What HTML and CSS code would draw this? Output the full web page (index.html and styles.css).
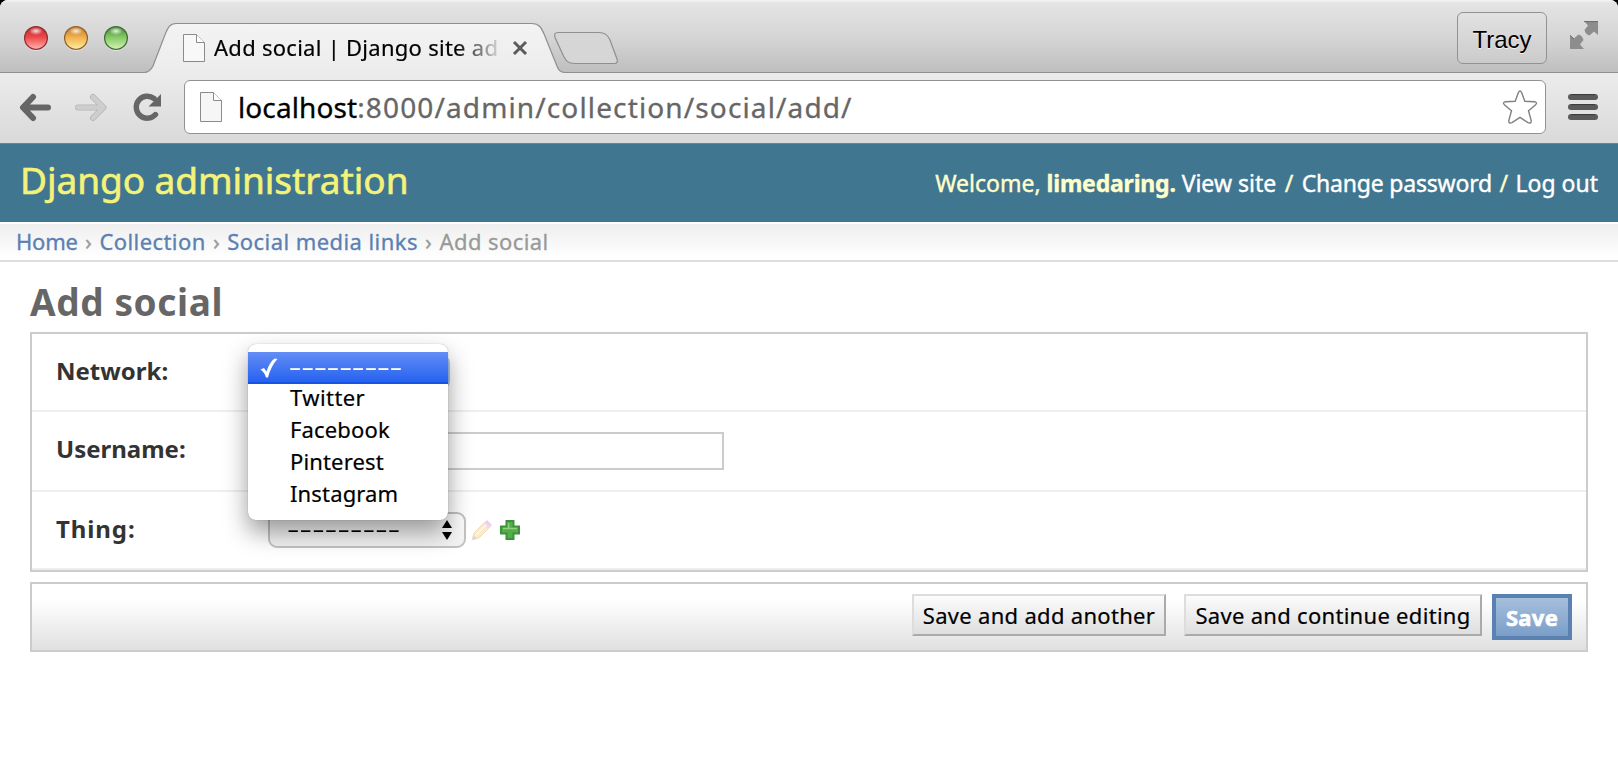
FILE: index.html
```html
<!DOCTYPE html>
<html lang="en">
<head>
<meta charset="utf-8">
<title>Add social | Django site admin</title>
<link rel="stylesheet" href="styles.css">
</head>
<body>
<div class="window">
  <div class="tabstrip">
    <svg class="tab-shapes" width="640" height="74" viewBox="0 0 640 74">
      <defs>
        <linearGradient id="tabFill" x1="0" y1="0" x2="0" y2="1"><stop offset="0" stop-color="#f3f3f3"/><stop offset="1" stop-color="#ececec"/></linearGradient>
        <linearGradient id="red" x1="0" y1="0" x2="0" y2="1"><stop offset="0" stop-color="#b8282c"/><stop offset=".45" stop-color="#ee4547"/><stop offset="1" stop-color="#ffb4ae"/></linearGradient>
        <linearGradient id="amber" x1="0" y1="0" x2="0" y2="1"><stop offset="0" stop-color="#bd7426"/><stop offset=".45" stop-color="#f0ae4a"/><stop offset="1" stop-color="#fff0a0"/></linearGradient>
        <linearGradient id="green" x1="0" y1="0" x2="0" y2="1"><stop offset="0" stop-color="#3f8633"/><stop offset=".45" stop-color="#83c763"/><stop offset="1" stop-color="#d6f5b4"/></linearGradient>
        <radialGradient id="shine"><stop offset="0" stop-color="#fff" stop-opacity=".85"/><stop offset="1" stop-color="#fff" stop-opacity="0"/></radialGradient>
      </defs>
      <path d="M144 74V72.5C149 72.5 151 70 153 66L164.500 36C168 27 170 23.500 176 23.500H532C539 23.500 541 27 544.500 35L556.500 65C558.500 70 560 72.500 565 72.500V74Z" fill="url(#tabFill)"/>
      <path d="M144 72.5C149 72.5 151 70 153 66L164.500 36C168 27 170 23.500 176 23.500H532C539 23.500 541 27 544.500 35L556.500 65C558.500 70 560 72.500 565 72.500" fill="none" stroke="#8f8f8f" stroke-width="1.200"/>
      <path d="M558 32.500H599C605 32.500 608 35 610 40L617 59Q618.500 63.500 614 63.500H575C568 63.500 566 61 563.500 56L555 37.500Q553.500 32.500 558 32.500Z" fill="#d6d6d6" stroke="#8f8f8f" stroke-width="1.200"/>
      <g stroke-width="1.300">
        <circle cx="36" cy="39" r="12" fill="#eee" opacity=".7"/><circle cx="76" cy="39" r="12" fill="#eee" opacity=".7"/><circle cx="116" cy="39" r="12" fill="#eee" opacity=".7"/>
        <circle cx="36" cy="38" r="11.400" fill="url(#red)" stroke="#8c3232"/>
        <circle cx="76" cy="38" r="11.400" fill="url(#amber)" stroke="#8f6230"/>
        <circle cx="116" cy="38" r="11.400" fill="url(#green)" stroke="#3f6f36"/>
      </g>
      <g fill="url(#shine)"><ellipse cx="36" cy="31" rx="7" ry="4"/><ellipse cx="76" cy="31" rx="7" ry="4"/><ellipse cx="116" cy="31" rx="7" ry="4"/></g>
    </svg>
    <div class="tab">
      <svg class="tab-doc" width="22" height="28" viewBox="0 0 22 28"><path d="M.5.5H13.500L21.500 8.500V27.500H.5Z" fill="#f8f8f8" stroke="#8b8b8b"/><path d="M13.500.5V8.500H21.500" fill="#fff" stroke="#8b8b8b"/></svg>
      <span class="tab-title">Add social | Django site ad</span>
      <svg class="tab-close" width="16" height="16" viewBox="0 0 16 16"><path d="M2 2L14 14M14 2L2 14" stroke="#5c5c5c" stroke-width="3"/></svg>
    </div>
    <div class="profile">Tracy</div>
    <svg class="fullscreen" width="28" height="28" viewBox="0 0 28 28"><path d="M14 0H28V14L24 10.500L19.500 14.500Q15.500 13.500 14.500 9L18 4.500Z" fill="#8d8d8d"/><path d="M14 28H0V14L4 17.500L8.500 13.500Q12.500 14.500 13.500 19L10 23.500Z" fill="#8d8d8d"/><path d="M14 .6H28M0 14.500L4 18" stroke="#6f6f6f" fill="none"/></svg>
  </div>
  <div class="toolbar">
    <svg class="nav" width="164" height="34" viewBox="0 0 164 34">
      <g fill="none" stroke-linecap="round" stroke-linejoin="round">
        <path d="M33 7L23 17.500L33 28M24 17.500H48" stroke="#666" stroke-width="6"/>
        <path d="M93 7L103.500 17.500L93 28M102 17.500H78" stroke="#b5b5b5" stroke-width="6"/>
        <path d="M93 7L103.500 17.500L93 28M102 17.500H78" stroke="#cecece" stroke-width="4.400"/>
        <path d="M155.500 24.500A11 11 0 1 1 154 8.500" stroke="#666" stroke-width="5.400"/>
      </g>
      <path d="M161 4V16.500H148.500Z" fill="#666"/>
    </svg>
    <div class="omnibox">
      <svg width="22" height="30" viewBox="0 0 22 30"><path d="M.5.5H13.500L21.500 8.500V29.500H.5Z" fill="#f6f6f6" stroke="#8b8b8b"/><path d="M13.500.5V8.500H21.500" fill="#fff" stroke="#8b8b8b"/></svg>
      <span class="url"><span class="host">localhost</span>:8000/admin/collection/social/add/</span>
      <svg class="star" width="36" height="36" viewBox="0 0 36 36"><path d="M16.400 3.500Q18 .5 19.600 3.500L22.800 12.200L32.500 12.700Q36 13.400 33.400 16L26.500 21.800L29.200 31.500Q29.500 35 26 33.700L18 28.300L10 33.700Q6.500 35 6.800 31.500L9.500 21.800L2.600 16Q0 13.400 3.500 12.700L13.200 12.200Z" fill="#fff" stroke="#808080" stroke-width="1.400"/></svg>
    </div>
    <svg class="menu-icon" width="30" height="26" viewBox="0 0 30 26"><g fill="#5a5a5a"><rect width="30" height="6" rx="3"/><rect y="10" width="30" height="6" rx="3"/><rect y="20" width="30" height="6" rx="3"/></g><path d="M3 .6H27M3 10.600H27M3 20.600H27" stroke="#3b3b3b"/></svg>
  </div>

  <header class="header">
    <div class="site-name">Django administration</div>
    <div class="user-tools">Welcome, <b>limedaring.</b> <a>View site</a> <span class="slash">/</span> <a class="password">Change password</a> <span class="slash last">/</span> <a>Log out</a></div>
  </header>
  <nav class="breadcrumbs"><a class="home">Home</a> <i>›</i> <a>Collection</a> <i>›</i> <a>Social media links</a> <i>›</i> <span>Add social</span></nav>

  <main class="content">
    <h1>Add social</h1>
    <div class="module">
      <div class="row row-network">
        <label>Network:</label>
        <div class="select select-focused"></div>
        <ul class="options">
          <li class="selected"><svg width="18" height="20" viewBox="0 0 18 20"><path d="M.5 11.500L4 10L6.500 13.500C8.500 7.500 11 3 14.500.5L17.500 1C13 5.500 10 12 8 19.500H6C5 16 3 13 .5 11.500Z" fill="#fff"/></svg><span class="dashes">---------</span></li>
          <li class="loose">Twitter</li>
          <li>Facebook</li>
          <li>Pinterest</li>
          <li>Instagram</li>
        </ul>
      </div>
      <div class="row row-username">
        <label>Username:</label>
        <div class="input"></div>
      </div>
      <div class="row row-thing">
        <label class="loose">Thing:</label>
        <div class="select"><span class="dashes">---------</span><svg width="10" height="20" viewBox="0 0 10 20"><path d="M5 0L10 8H0ZM5 20L10 12H0Z" fill="#000"/></svg></div>
        <svg class="pencil" width="20" height="20" viewBox="0 0 20 20"><path d="M1 19L2 13L13 2L18 7L7 18Z" fill="#fbe9c8" stroke="#f0dcba"/><path d="M12 3L15 0L20 5L17 8Z" fill="#f2cdea"/><path d="M11 4L13 2L18 7L16 9Z" fill="#e9e0ea"/><path d="M0 20L1 15L5 19Z" fill="#ddd6cf"/><path d="M4 15L14 5" stroke="#fff6e2" stroke-width="2"/></svg>
        <svg class="plus" width="20" height="20" viewBox="0 0 20 20"><path d="M6.500 1H13.500V6.500H19V13.500H13.500V19H6.500V13.500H1V6.500H6.500Z" fill="#55ad49" stroke="#3b9238" stroke-width="2"/><path d="M8.500 3V8.500H3M8.500 8.500H17" fill="none" stroke="#92d17e" stroke-width="1.500"/></svg>
      </div>
    </div>
    <div class="submit-row">
      <button class="btn btn-another">Save and add another</button>
      <button class="btn btn-continue">Save and continue editing</button>
      <button class="btn btn-save">Save</button>
    </div>
  </main>
</div>
</body>
</html>
```
FILE: styles.css
```css
* { box-sizing: border-box; }
body { margin: 0; background: #000; font-family: "Noto Sans", "Open Sans", sans-serif; color: #000; }
svg { display: block; flex: none; }
.window { width: 1618px; height: 768px; overflow: hidden; background: #fff; border-radius: 8px 8px 0 0; }

.tabstrip { position: relative; display: flex; align-items: flex-start; height: 73px; padding-right: 20px; background: linear-gradient(#f5f5f5 0, #e4e4e4 3px, #d5d5d5 38px, #bfbfbf 71px); border-bottom: 1px solid #8f8f8f; }
.tab-shapes { position: absolute; left: 0; top: 0; }
.tab { position: relative; display: flex; align-items: center; width: 350px; height: 48px; margin-left: 183px; margin-top: 24px; }
.tab-title { width: 290px; margin-left: 9px; padding-bottom: 2px; font-size: 22px; line-height: 40px; letter-spacing: .27px; white-space: nowrap; -webkit-text-stroke: .2px; -webkit-mask-image: linear-gradient(90deg, #000 242px, transparent 290px); mask-image: linear-gradient(90deg, #000 242px, transparent 290px); }
.tab-close { margin-left: 8px; }
.profile { display: flex; align-items: center; justify-content: center; width: 90px; height: 52px; margin: 12px 23px 0 auto; padding-top: 3px; border: 1px solid #929292; border-radius: 6px; background: linear-gradient(#e2e2e2, #cbcbcb); font: 24px "Liberation Sans", sans-serif; text-shadow: 0 1px 0 #f4f4f4; }
.fullscreen { margin-top: 21px; }

.toolbar { display: flex; align-items: center; height: 71px; padding: 0 20px 2px 0; background: linear-gradient(#ececec, #d9d9d9); border-bottom: 1px solid #7e7e7e; }
.omnibox { display: flex; align-items: center; width: 1362px; height: 54px; margin-left: 20px; margin-right: auto; padding: 0 7px 0 15px; border: 1px solid #929292; border-radius: 6px; background: #fff; }
.url { margin-left: 16px; font-size: 28px; line-height: 50px; letter-spacing: 1.130px; color: #666; white-space: nowrap; -webkit-text-stroke: .3px; }
.host { color: #000; letter-spacing: .1px; }
.star { margin-left: auto; }

.header { display: flex; align-items: center; justify-content: space-between; height: 78px; padding: 0 20px; background: #417690; }
.site-name { padding-bottom: 6px; font-size: 37px; line-height: 50px; letter-spacing: -.05px; color: #f4f379; -webkit-text-stroke: .6px; }
.user-tools { font-size: 23px; line-height: 40px; color: #ffc; white-space: nowrap; -webkit-text-stroke: .4px; }
.user-tools b { letter-spacing: -.2px; }
.user-tools a { color: #fff; }
.user-tools .password { letter-spacing: -.2px; }
.slash { margin: 0 2.500px; }
.slash.last { margin: 0 1.500px; }
.breadcrumbs { height: 40px; padding-left: 16px; border-top: 2px solid #fff; border-bottom: 2px solid #ddd; background: linear-gradient(#eee, #fff 34px); font-size: 22px; line-height: 35px; letter-spacing: .43px; color: #999; white-space: nowrap; -webkit-text-stroke: .3px; }
.breadcrumbs a { color: #5b80b2; }
.breadcrumbs .home { letter-spacing: -.2px; }
.breadcrumbs i { margin: 0 1px; font-style: normal; }

.content { padding: 18px 30px 0; }
h1 { margin: 0 0 8px; font-size: 37px; line-height: 44px; letter-spacing: .6px; color: #666; }
.module { height: 240px; border: 2px solid #ccc; }
.row { position: relative; display: flex; align-items: center; border-bottom: 2px solid #eee; padding-left: 24px; }
.row-network { height: 78px; }
.row-username { height: 80px; }
.row-thing { height: 78px; }
label { width: 212px; padding-bottom: 3px; font-size: 24px; font-weight: bold; line-height: 40px; color: #333; }
.row-username label { padding-bottom: 5px; }
label.loose { letter-spacing: .9px; }
.select { display: flex; align-items: center; width: 198px; height: 36px; padding: 0 12px 0 17px; border: 2px solid #c2c2c2; border-radius: 9px; background: linear-gradient(#fff, #f2f2f2); justify-content: space-between; }
.select-focused { width: 182px; border-color: #a8cbf0; }
.input { width: 456px; height: 38px; border: 2px solid #ccc; background: #fff; }
.pencil { margin-left: 6px; }
.plus { margin-left: 8px; }
.dashes { width: 66px; padding-bottom: 4px; font-size: 22px; line-height: 28px; letter-spacing: .12px; white-space: nowrap; transform: scaleX(1.75); transform-origin: left; }

.options { position: absolute; z-index: 2; left: 216px; top: 10px; width: 200px; height: 176px; margin: 0; padding: 8px 0; border-radius: 8px; background: #fff; box-shadow: 0 0 1px rgba(0,0,0,.4), 0 12px 24px rgba(0,0,0,.4); list-style: none; }
.options li { height: 32px; padding: 0 0 5px 42px; font-size: 22px; line-height: 27px; letter-spacing: .15px; -webkit-text-stroke: .2px; }
.options .loose { letter-spacing: .42px; }
.options .selected { display: flex; align-items: center; padding: 0 0 0 12px; background: linear-gradient(#648df5, #2662f0 94%, #1554e4 94%); color: #fff; }
.options .selected .dashes { margin-left: 11px; padding-bottom: 4px; letter-spacing: .12px; }

.submit-row { display: flex; align-items: flex-start; justify-content: flex-end; height: 70px; margin-top: 10px; padding: 10px 14px 0; border: 2px solid #ccc; background: linear-gradient(#fff 25%, #e0e0e0); }
.btn { height: 42px; padding: 0; border: 2px solid; border-color: #ddd #aaa #aaa #ddd; background: linear-gradient(#fcfcfc, #dedede); font: 22px/36px "Noto Sans", sans-serif; letter-spacing: .3px; color: #000; -webkit-text-stroke: .2px; white-space: nowrap; }
.btn-another { width: 254px; }
.btn-continue { width: 298px; margin-left: 18px; }
.btn-save { width: 80px; height: 46px; margin-left: 10px; border: 4px solid #5b80b2; background: linear-gradient(#a6bfdd, #7a9ec8); font-weight: bold; color: #fff; -webkit-text-stroke: .6px; }
```
